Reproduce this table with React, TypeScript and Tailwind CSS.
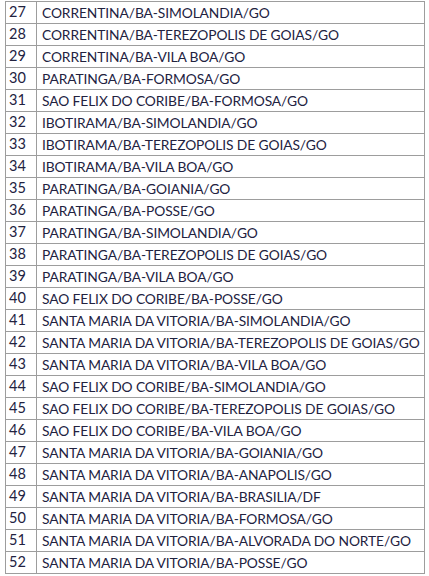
const rows: [number, string][] = [
  [27, "CORRENTINA/BA-SIMOLANDIA/GO"],
  [28, "CORRENTINA/BA-TEREZOPOLIS DE GOIAS/GO"],
  [29, "CORRENTINA/BA-VILA BOA/GO"],
  [30, "PARATINGA/BA-FORMOSA/GO"],
  [31, "SAO FELIX DO CORIBE/BA-FORMOSA/GO"],
  [32, "IBOTIRAMA/BA-SIMOLANDIA/GO"],
  [33, "IBOTIRAMA/BA-TEREZOPOLIS DE GOIAS/GO"],
  [34, "IBOTIRAMA/BA-VILA BOA/GO"],
  [35, "PARATINGA/BA-GOIANIA/GO"],
  [36, "PARATINGA/BA-POSSE/GO"],
  [37, "PARATINGA/BA-SIMOLANDIA/GO"],
  [38, "PARATINGA/BA-TEREZOPOLIS DE GOIAS/GO"],
  [39, "PARATINGA/BA-VILA BOA/GO"],
  [40, "SAO FELIX DO CORIBE/BA-POSSE/GO"],
  [41, "SANTA MARIA DA VITORIA/BA-SIMOLANDIA/GO"],
  [42, "SANTA MARIA DA VITORIA/BA-TEREZOPOLIS DE GOIAS/GO"],
  [43, "SANTA MARIA DA VITORIA/BA-VILA BOA/GO"],
  [44, "SAO FELIX DO CORIBE/BA-SIMOLANDIA/GO"],
  [45, "SAO FELIX DO CORIBE/BA-TEREZOPOLIS DE GOIAS/GO"],
  [46, "SAO FELIX DO CORIBE/BA-VILA BOA/GO"],
  [47, "SANTA MARIA DA VITORIA/BA-GOIANIA/GO"],
  [48, "SANTA MARIA DA VITORIA/BA-ANAPOLIS/GO"],
  [49, "SANTA MARIA DA VITORIA/BA-BRASILIA/DF"],
  [50, "SANTA MARIA DA VITORIA/BA-FORMOSA/GO"],
  [51, "SANTA MARIA DA VITORIA/BA-ALVORADA DO NORTE/GO"],
  [52, "SANTA MARIA DA VITORIA/BA-POSSE/GO"],
];

export default function App() {
  return (
    <div className="w-[429px] h-[576px] bg-white pt-px pl-[5px] font-['Lato',sans-serif] text-[#22223f]">
      <table className="w-[420px] border-collapse table-fixed">
        <tbody>
          {rows.map(([n, route]) => (
            <tr key={n} className="h-[22px]">
              <td className="w-[31px] border border-[#9d9d9d] p-0 pl-[3px] text-[14.5px] leading-none whitespace-nowrap">
                {n}
              </td>
              <td className="border border-[#9d9d9d] p-0 pl-[5px] text-[13.8px] leading-none whitespace-nowrap tracking-[-0.1px]">
                {route}
              </td>
            </tr>
          ))}
        </tbody>
      </table>
    </div>
  );
}
